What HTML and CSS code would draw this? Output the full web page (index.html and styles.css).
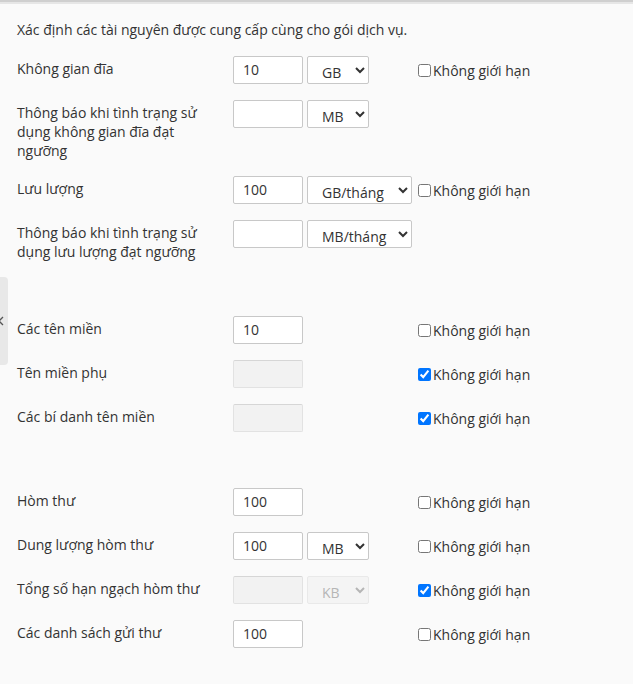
FILE: index.html
```html
<!DOCTYPE html>
<html lang="vi">
<head>
<meta charset="utf-8">
<title>Tài nguyên</title>
<link rel="stylesheet" href="styles.css">
</head>
<body>
<div class="topbar"></div>
<div class="side-tab">
  <svg width="8" height="10" viewBox="0 0 8 10"><path d="M5 1 L1 5 L5 9" fill="none" stroke="#555" stroke-width="1.3"/></svg>
</div>
<main class="page">
  <p class="intro">Xác định các tài nguyên được cung cấp cùng cho gói dịch vụ.</p>

  <section class="group">
    <div class="row">
      <div class="label">Không gian đĩa</div>
      <div class="controls">
        <input class="num" type="text" value="10">
        <select class="unit"><option>GB</option></select>
      </div>
      <label class="unl"><input type="checkbox">Không giới hạn</label>
    </div>
    <div class="row">
      <div class="label">Thông báo khi tình trạng sử dụng không gian đĩa đạt ngưỡng</div>
      <div class="controls">
        <input class="num" type="text" value="">
        <select class="unit"><option>MB</option></select>
      </div>
      <div></div>
    </div>
    <div class="row">
      <div class="label">Lưu lượng</div>
      <div class="controls">
        <input class="num" type="text" value="100">
        <select class="unit wide"><option>GB/tháng</option></select>
      </div>
      <label class="unl"><input type="checkbox">Không giới hạn</label>
    </div>
    <div class="row">
      <div class="label">Thông báo khi tình trạng sử dụng lưu lượng đạt ngưỡng</div>
      <div class="controls">
        <input class="num" type="text" value="">
        <select class="unit wide"><option>MB/tháng</option></select>
      </div>
      <div></div>
    </div>
  </section>

  <section class="group domains">
    <div class="row">
      <div class="label">Các tên miền</div>
      <div class="controls"><input class="num" type="text" value="10"></div>
      <label class="unl"><input type="checkbox">Không giới hạn</label>
    </div>
    <div class="row">
      <div class="label">Tên miền phụ</div>
      <div class="controls"><input class="num" type="text" value="" disabled></div>
      <label class="unl"><input type="checkbox" checked>Không giới hạn</label>
    </div>
    <div class="row">
      <div class="label">Các bí danh tên miền</div>
      <div class="controls"><input class="num" type="text" value="" disabled></div>
      <label class="unl"><input type="checkbox" checked>Không giới hạn</label>
    </div>
  </section>

  <section class="group mail">
    <div class="row">
      <div class="label">Hòm thư</div>
      <div class="controls"><input class="num" type="text" value="100"></div>
      <label class="unl"><input type="checkbox">Không giới hạn</label>
    </div>
    <div class="row">
      <div class="label">Dung lượng hòm thư</div>
      <div class="controls">
        <input class="num" type="text" value="100">
        <select class="unit"><option>MB</option></select>
      </div>
      <label class="unl"><input type="checkbox">Không giới hạn</label>
    </div>
    <div class="row">
      <div class="label">Tổng số hạn ngạch hòm thư</div>
      <div class="controls">
        <input class="num" type="text" value="" disabled>
        <select class="unit" disabled><option>KB</option></select>
      </div>
      <label class="unl"><input type="checkbox" checked>Không giới hạn</label>
    </div>
    <div class="row">
      <div class="label">Các danh sách gửi thư</div>
      <div class="controls"><input class="num" type="text" value="100"></div>
      <label class="unl"><input type="checkbox">Không giới hạn</label>
    </div>
  </section>
</main>
</body>
</html>
```

FILE: styles.css
```css
html, body {
  margin: 0;
  padding: 0;
  background: #fafafa;
}
body {
  font-family: "Open Sans", "Noto Sans", sans-serif;
  font-size: 14px;
  line-height: 20px;
  color: #333;
  min-height: 684px;
  position: relative;
}
.topbar {
  height: 2px;
  background: #cfcfcf;
  border-bottom: 2px solid #e6e6e6;
}
.side-tab {
  position: absolute;
  left: -16px;
  top: 277px;
  width: 24px;
  height: 88px;
  background: #e8e8e8;
  border-radius: 4px;
}
.side-tab svg {
  position: absolute;
  left: 14px;
  top: 39px;
}
.page {
  padding: 16px 0 0 17px;
}
.intro {
  margin: 0 0 8px 0;
}
.group.domains {
  margin-top: 39px;
}
.group.mail {
  margin-top: 40px;
}
.row {
  display: grid;
  grid-template-columns: 216px 181px auto;
  align-items: start;
  padding: 8px 0;
}
.label {
  padding: 3px 14px 0 0;
  line-height: 19px;
}
.controls {
  display: flex;
  gap: 4px;
}
.num {
  box-sizing: border-box;
  width: 70px;
  height: 28px;
  margin: 0;
  padding: 0 9px 1px;
  border: 1px solid #c8c8c8;
  border-radius: 2px;
  background: #fff;
  font: inherit;
  color: #333;
  outline: none;
}
.num:disabled {
  background: #f2f2f2;
  border-color: #e2e2e2;
  border-top-color: #d6d6d6;
}
.unit {
  box-sizing: border-box;
  width: 62px;
  height: 28px;
  margin: 0;
  padding: 4px 0 0 10px;
  border: 1px solid #c8c8c8;
  border-radius: 2px;
  background: #fff;
  font: inherit;
  color: #333;
}
.unit.wide {
  width: 105px;
}
.unit:disabled {
  background: #f2f2f2;
  border-color: #e2e2e2;
  color: #999;
}
.unl {
  box-sizing: border-box;
  display: flex;
  align-items: center;
  height: 28px;
  padding-top: 1px;
  white-space: nowrap;
}
.unl input {
  margin: 0 2px 0 4px;
  width: 13px;
  height: 13px;
}
```
